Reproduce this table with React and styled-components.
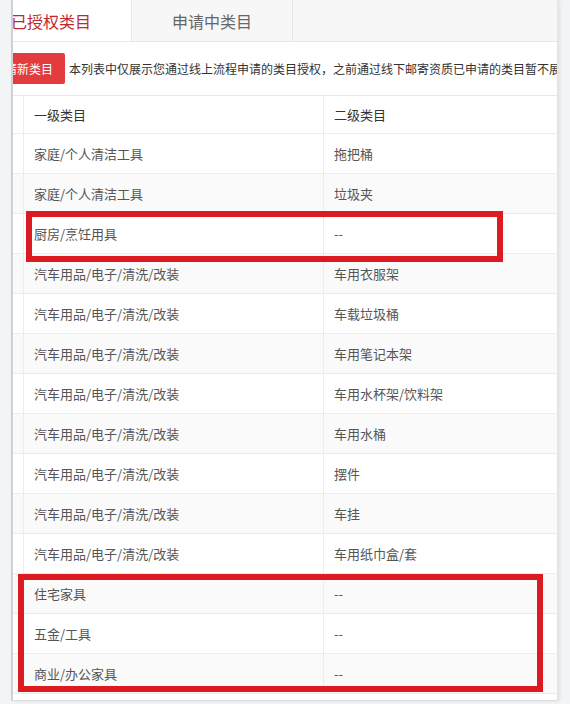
import React, { useLayoutEffect, useRef } from "react";
import styled, { createGlobalStyle } from "styled-components";

const GlobalStyle = createGlobalStyle`
  html, body {
    margin: 0;
    padding: 0;
    background: #f2f4f6;
    font-family: "Noto Sans CJK SC", "Noto Sans", sans-serif;
    overflow: hidden;
  }
`;

const Page = styled.div`
  position: relative;
  width: 570px;
  height: 704px;
`;

const Panel = styled.div`
  margin-left: 11px;
  width: 544px;
  height: 700px;
  background: #fff;
  border-left: 2px solid #cfd1d3;
  border-right: 1px solid #e4e4e4;
  border-bottom: 1px solid #dcdcdc;
  box-shadow: 2px 0 4px rgba(0, 0, 0, 0.08);
`;

const Viewport = styled.div`
  width: 544px;
  height: 100%;
  overflow: hidden;
`;

const Content = styled.div`
  width: 600px;
`;

const TabBar = styled.div`
  display: flex;
  height: 41px;
  background: #f7f7f7;
  border-bottom: 1px solid #e8e8e8;
`;

const Tab = styled.div`
  width: 161px;
  box-sizing: border-box;
  display: flex;
  align-items: center;
  justify-content: center;
  font-size: 16px;
  color: ${(p) => (p.$active ? "#c0282e" : "#666")};
  background: ${(p) => (p.$active ? "#fff" : "#f7f7f7")};
  border-right: 1px solid #e8e8e8;
`;

const Toolbar = styled.div`
  display: flex;
  align-items: center;
  gap: 4px;
  padding: 11px 0 11px 10px;
`;

const RedButton = styled.button`
  height: 31px;
  padding: 0 12px;
  border: none;
  border-radius: 2px;
  background: #e33b3e;
  color: #fff;
  font-family: inherit;
  font-size: 12px;
  flex-shrink: 0;
`;

const Notice = styled.span`
  font-size: 12px;
  color: #333;
  white-space: nowrap;
`;

const Table = styled.div`
  margin-left: 10px;
  width: 576px;
  border-top: 1px solid #e8e8e8;
`;

const Row = styled.div`
  display: grid;
  grid-template-columns: 42px 300px 234px;
  height: ${(p) => (p.$head ? "38px" : "40px")};
  box-sizing: border-box;
  border-bottom: 1px solid #ededed;
  background: ${(p) => (p.$striped ? "#fafafa" : "#fff")};
  font-size: 13px;
  color: ${(p) => (p.$head ? "#333" : "#555")};
`;

const Cell = styled.div`
  display: flex;
  align-items: center;
  padding-left: 10px;
  border-left: ${(p) => (p.$first ? "none" : "1px solid #ededed")};
  white-space: nowrap;
`;

const Mark = styled.div`
  position: absolute;
  box-sizing: border-box;
  border: 6px solid #dc1a20;
  left: ${(p) => p.$x}px;
  top: ${(p) => p.$y}px;
  width: ${(p) => p.$w}px;
  height: ${(p) => p.$h}px;
`;

const rows = [
  ["家庭/个人清洁工具", "拖把桶"],
  ["家庭/个人清洁工具", "垃圾夹"],
  ["厨房/烹饪用具", "--"],
  ["汽车用品/电子/清洗/改装", "车用衣服架"],
  ["汽车用品/电子/清洗/改装", "车载垃圾桶"],
  ["汽车用品/电子/清洗/改装", "车用笔记本架"],
  ["汽车用品/电子/清洗/改装", "车用水杯架/饮料架"],
  ["汽车用品/电子/清洗/改装", "车用水桶"],
  ["汽车用品/电子/清洗/改装", "摆件"],
  ["汽车用品/电子/清洗/改装", "车挂"],
  ["汽车用品/电子/清洗/改装", "车用纸巾盒/套"],
  ["住宅家具", "--"],
  ["五金/工具", "--"],
  ["商业/办公家具", "--"],
];

const App = () => {
  const viewRef = useRef(null);

  // the page is shown scrolled a bit to the right
  useLayoutEffect(() => {
    if (viewRef.current) viewRef.current.scrollLeft = 42;
  }, []);

  return (
    <Page>
      <GlobalStyle />
      <Panel>
        <Viewport ref={viewRef}>
          <Content>
            <TabBar>
              <Tab $active>已授权类目</Tab>
              <Tab>申请中类目</Tab>
            </TabBar>
            <Toolbar>
              <RedButton>申请新类目</RedButton>
              <Notice>
                本列表中仅展示您通过线上流程申请的类目授权，之前通过线下邮寄资质已申请的类目暂不展示
              </Notice>
            </Toolbar>
            <Table>
              <Row $head>
                <Cell $first />
                <Cell>一级类目</Cell>
                <Cell>二级类目</Cell>
              </Row>
              {rows.map((r, i) => (
                <Row key={i} $striped={i % 2 === 1}>
                  <Cell $first />
                  <Cell>{r[0]}</Cell>
                  <Cell>{r[1]}</Cell>
                </Row>
              ))}
            </Table>
          </Content>
        </Viewport>
      </Panel>
      <Mark $x={26} $y={211} $w={477} $h={51} />
      <Mark $x={18} $y={574} $w={525} $h={118} />
    </Page>
  );
};

export default App;
